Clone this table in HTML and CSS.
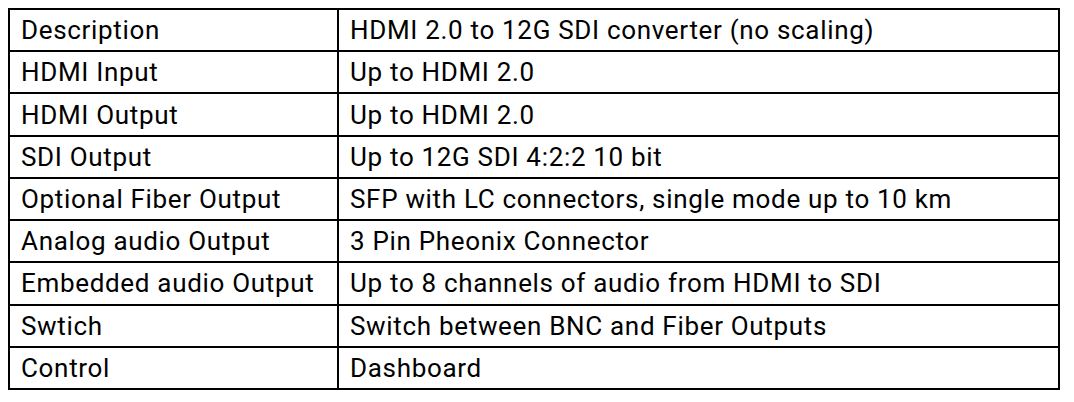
FILE: index.html
```html
<!DOCTYPE html>
<html>
<head>
<meta charset="utf-8">
<link rel="stylesheet" href="styles.css">
</head>
<body>
<table class="spec">
  <tr><td class="key">Description</td><td class="val">HDMI 2.0 to 12G SDI converter (no scaling)</td></tr>
  <tr><td class="key">HDMI Input</td><td class="val">Up to HDMI 2.0</td></tr>
  <tr><td class="key">HDMI Output</td><td class="val">Up to HDMI 2.0</td></tr>
  <tr><td class="key">SDI Output</td><td class="val">Up to 12G SDI 4:2:2 10 bit</td></tr>
  <tr><td class="key">Optional Fiber Output</td><td class="val">SFP with LC connectors, single mode up to 10 km</td></tr>
  <tr><td class="key">Analog audio Output</td><td class="val">3 Pin Pheonix Connector</td></tr>
  <tr><td class="key">Embedded audio Output</td><td class="val">Up to 8 channels of audio from HDMI to SDI</td></tr>
  <tr><td class="key">Swtich</td><td class="val">Switch between BNC and Fiber Outputs</td></tr>
  <tr><td class="key">Control</td><td class="val">Dashboard</td></tr>
</table>
</body>
</html>
```
FILE: styles.css
```css
html, body {
  margin: 0;
  padding: 0;
  background: #fff;
}
body {
  padding: 8px 0 0 8px;
  font-family: Roboto, "Liberation Sans", sans-serif;
  color: #000;
}
.spec {
  border-collapse: collapse;
  width: 1052px;
  height: 382px;
  table-layout: fixed;
}
.spec td {
  border: 2px solid #000;
  padding: 0 0 0 11px;
  font-size: 26px;
  letter-spacing: 0.68px;
  line-height: 40px;
  vertical-align: middle;
  white-space: nowrap;
}
.spec .key {
  width: 316px;
}
```
